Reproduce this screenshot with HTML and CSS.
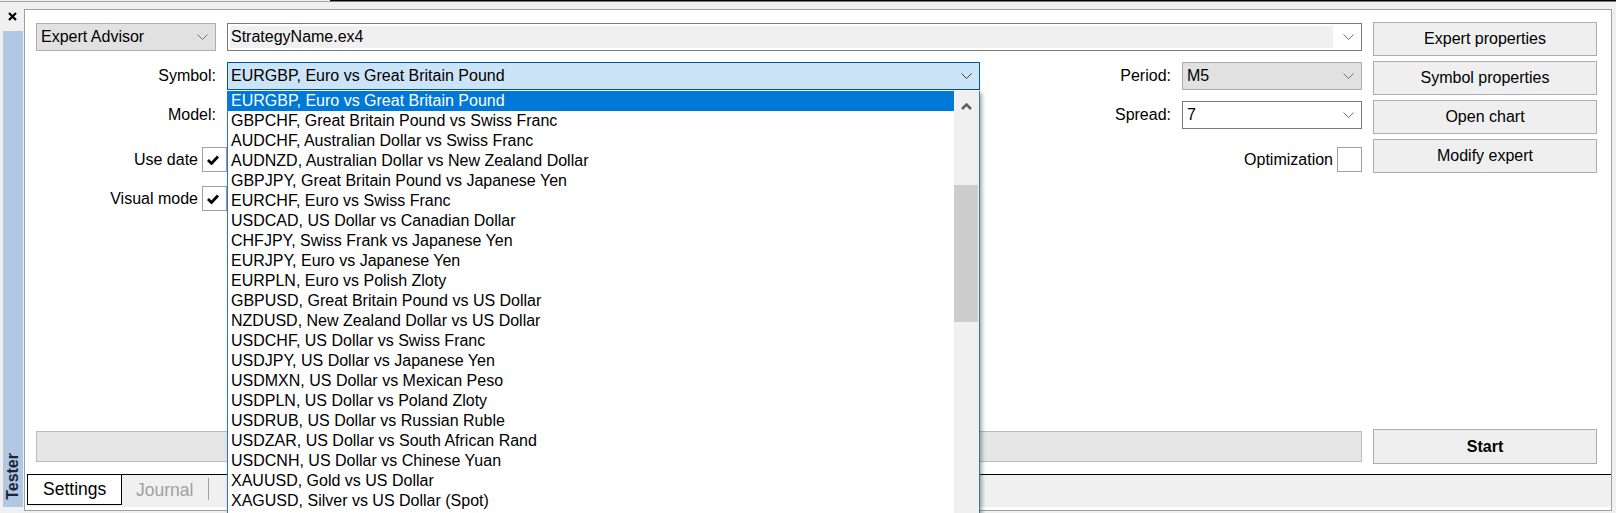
FILE: index.html
```html
<!DOCTYPE html>
<html lang="en">
<head>
    <meta charset="UTF-8">
    <title>Strategy Tester</title>
    <link rel="stylesheet" href="styles.css">
</head>
<body>
    <div class="edge">
        <span class="edge-light"></span>
        <span class="edge-dark"></span>
    </div>
    <div class="main">
        <aside class="dock">
            <div class="dock-close">
                <svg width="9" height="9" viewBox="0 0 9 9"><path d="M1 1 L8 8 M8 1 L1 8" stroke="#000" stroke-width="2.2"/></svg>
            </div>
            <div class="dock-tab"><span>Tester</span></div>
        </aside>
        <div class="workspace">
            <section class="panel">
                <div class="form">
                    <div class="fields">
                        <!-- expert + file -->
                        <div class="row row-first">
                            <div class="combo combo-grey combo-expert">
                                <span class="combo-text">Expert Advisor</span>
                                <svg class="chev" width="11" height="6" viewBox="0 0 11 6"><path d="M0.5 0.5 L5.5 5.5 L10.5 0.5" fill="none" stroke="#707070"/></svg>
                            </div>
                            <div class="combo combo-edit">
                                <span class="combo-edit-text">StrategyName.ex4</span>
                                <svg class="chev" width="11" height="6" viewBox="0 0 11 6"><path d="M0.5 0.5 L5.5 5.5 L10.5 0.5" fill="none" stroke="#707070"/></svg>
                            </div>
                        </div>

                        <!-- symbol + period -->
                        <div class="row">
                            <label class="label">Symbol:</label>
                            <div class="combo combo-open combo-symbol">
                                <span class="combo-text">EURGBP, Euro vs Great Britain Pound</span>
                                <svg class="chev" width="11" height="6" viewBox="0 0 11 6"><path d="M0.5 0.5 L5.5 5.5 L10.5 0.5" fill="none" stroke="#404040"/></svg>
                                <div class="dropdown">
                                    <ul class="dropdown-list">
                                        <li class="selected">EURGBP, Euro vs Great Britain Pound</li>
                                        <li>GBPCHF, Great Britain Pound vs Swiss Franc</li>
                                        <li>AUDCHF, Australian Dollar vs Swiss Franc</li>
                                        <li>AUDNZD, Australian Dollar vs New Zealand Dollar</li>
                                        <li>GBPJPY, Great Britain Pound vs Japanese Yen</li>
                                        <li>EURCHF, Euro vs Swiss Franc</li>
                                        <li>USDCAD, US Dollar vs Canadian Dollar</li>
                                        <li>CHFJPY, Swiss Frank vs Japanese Yen</li>
                                        <li>EURJPY, Euro vs Japanese Yen</li>
                                        <li>EURPLN, Euro vs Polish Zloty</li>
                                        <li>GBPUSD, Great Britain Pound vs US Dollar</li>
                                        <li>NZDUSD, New Zealand Dollar vs US Dollar</li>
                                        <li>USDCHF, US Dollar vs Swiss Franc</li>
                                        <li>USDJPY, US Dollar vs Japanese Yen</li>
                                        <li>USDMXN, US Dollar vs Mexican Peso</li>
                                        <li>USDPLN, US Dollar vs Poland Zloty</li>
                                        <li>USDRUB, US Dollar vs Russian Ruble</li>
                                        <li>USDZAR, US Dollar vs South African Rand</li>
                                        <li>USDCNH, US Dollar vs Chinese Yuan</li>
                                        <li>XAUUSD, Gold vs US Dollar</li>
                                        <li>XAGUSD, Silver vs US Dollar (Spot)</li>
                                    </ul>
                                    <div class="scrollbar">
                                        <div class="scroll-up">
                                            <svg width="11" height="8" viewBox="0 0 11 8"><path d="M1 7 L5.5 2.5 L10 7" fill="none" stroke="#606060" stroke-width="2.5"/></svg>
                                        </div>
                                        <div class="scroll-thumb"></div>
                                    </div>
                                </div>
                            </div>
                            <span class="spacer"></span>
                            <label class="label label-side">Period:</label>
                            <div class="combo combo-grey combo-side">
                                <span class="combo-text">M5</span>
                                <svg class="chev" width="11" height="6" viewBox="0 0 11 6"><path d="M0.5 0.5 L5.5 5.5 L10.5 0.5" fill="none" stroke="#707070"/></svg>
                            </div>
                        </div>

                        <!-- model + spread -->
                        <div class="row">
                            <label class="label">Model:</label>
                            <div class="combo combo-white combo-symbol"></div>
                            <span class="spacer"></span>
                            <label class="label label-side">Spread:</label>
                            <div class="combo combo-white combo-side">
                                <span class="combo-text">7</span>
                                <svg class="chev" width="11" height="6" viewBox="0 0 11 6"><path d="M0.5 0.5 L5.5 5.5 L10.5 0.5" fill="none" stroke="#707070"/></svg>
                            </div>
                        </div>

                        <div class="row row-check row-date">
                            <div class="check-group">
                                <span>Use date</span>
                                <span class="check">
                                    <svg width="12" height="10" viewBox="0 0 12 10"><path d="M1 5 L4.5 8.5 L11 1.5" fill="none" stroke="#000" stroke-width="2.8"/></svg>
                                </span>
                            </div>
                            <span class="spacer"></span>
                            <div class="check-group check-group-side">
                                <span>Optimization</span>
                                <span class="check"></span>
                            </div>
                        </div>

                        <div class="row row-check row-visual">
                            <div class="check-group">
                                <span>Visual mode</span>
                                <span class="check">
                                    <svg width="12" height="10" viewBox="0 0 12 10"><path d="M1 5 L4.5 8.5 L11 1.5" fill="none" stroke="#000" stroke-width="2.8"/></svg>
                                </span>
                            </div>
                        </div>
                    </div>

                    <div class="actions">
                        <button class="btn">Expert properties</button>
                        <button class="btn">Symbol properties</button>
                        <button class="btn">Open chart</button>
                        <button class="btn">Modify expert</button>
                    </div>
                </div>

                <div class="bottom">
                    <div class="progress"></div>
                    <button class="btn btn-start">Start</button>
                </div>

                <nav class="tabs">
                    <span class="tab tab-active">Settings</span>
                    <span class="tab tab-muted">Journal</span>
                    <span class="tab-sep"></span>
                </nav>
            </section>
        </div>
    </div>
</body>
</html>
```

FILE: styles.css
```css
* {
    margin: 0;
    padding: 0;
    box-sizing: border-box;
}

body {
    width: 1616px;
    height: 513px;
    overflow: hidden;
    background: #f0f0f0;
    font-family: "Liberation Sans", Arial, sans-serif;
    font-size: 16px;
    color: #000;
}

/* strip left over from the window above */
.edge {
    display: flex;
    height: 2px;
}

.edge-light {
    width: 330px;
    border-bottom: 1px solid #a0a0a0;
}

.edge-dark {
    flex: 1;
    border-top: 1px solid #000;
    border-bottom: 1px solid #7a7a7a;
}

.main {
    display: flex;
    height: 511px;
}

/* left dock with the vertical tab */
.dock {
    width: 24px;
    display: flex;
    flex-direction: column;
}

.dock-close {
    height: 29px;
    display: flex;
    align-items: center;
    justify-content: center;
}

.dock-tab {
    margin-left: 3px;
    width: 20px;
    height: 476px;
    background: #b0c8e2;
    display: flex;
    align-items: flex-end;
    justify-content: center;
    padding-bottom: 7px;
}

.dock-tab span {
    writing-mode: vertical-rl;
    transform: rotate(180deg);
    font-weight: bold;
    font-size: 16px;
    color: #1b2636;
}

.workspace {
    flex: 1;
    padding: 7px 4px 0 0;
}

.panel {
    height: 502px;
    background: #fff;
    border: 1px solid #a0a0a0;
    display: flex;
    flex-direction: column;
}

.form {
    display: flex;
    gap: 11px;
    padding: 12px 14px 0 11px;
}

.fields {
    flex: 1;
}

.row {
    display: flex;
    align-items: center;
    height: 28px;
    margin-top: 11px;
}

.row-first {
    margin-top: 1px;
}

.row-check {
    height: 25px;
}

.row-date {
    margin-top: 18px;
}

.row-visual {
    margin-top: 14px;
}

.label {
    width: 180px;
    flex-shrink: 0;
    margin-right: 11px;
    text-align: right;
    white-space: nowrap;
}

.label-side {
    width: auto;
}

.spacer {
    flex: 1;
}

/* combo boxes */
.combo {
    display: flex;
    align-items: center;
    height: 28px;
    border: 1px solid #adadad;
    padding: 0 7px 0 4px;
    flex-shrink: 0;
}

.combo-text {
    flex: 1;
    white-space: nowrap;
}

.chev {
    flex-shrink: 0;
}

.combo-grey {
    background: #e1e1e1;
}

.combo-white {
    background: #fff;
    border-color: #7a7a7a;
}

.combo-expert {
    width: 180px;
    margin-right: 11px;
}

.combo-edit {
    flex: 1;
    border-color: #7a7a7a;
    padding: 2px 7px 2px 2px;
}

.combo-edit-text {
    flex: 1;
    align-self: stretch;
    display: flex;
    align-items: center;
    background: #f0f0f0;
    padding-left: 1px;
    margin-right: 10px;
}

.combo-symbol {
    width: 753px;
    position: relative;
    padding-left: 3px;
}

.combo-open {
    background: #cce4f7;
    border-color: #005499;
}

.combo-side {
    width: 180px;
}

/* open symbol list */
.dropdown {
    position: absolute;
    top: 28px;
    left: -1px;
    right: -1px;
    height: 430px;
    display: flex;
    background: #fff;
    border: 1px solid #2b79c2;
    border-top: none;
    box-shadow: 2px 2px 4px rgba(0, 0, 0, 0.35);
    z-index: 5;
}

.dropdown-list {
    flex: 1;
    list-style: none;
}

.dropdown-list li {
    height: 20px;
    line-height: 20px;
    padding-left: 3px;
    white-space: nowrap;
}

.dropdown-list .selected {
    background: #0078d7;
    color: #fff;
}

.scrollbar {
    width: 25px;
    background: #f0f0f0;
}

.scroll-up {
    height: 27px;
    display: flex;
    justify-content: center;
    padding-top: 11px;
}

.scroll-thumb {
    height: 137px;
    margin-top: 67px;
    margin-right: 1px;
    background: #cdcdcd;
}

/* check boxes */
.check-group {
    width: 191px;
    display: flex;
    justify-content: flex-end;
    align-items: center;
    gap: 4px;
    white-space: nowrap;
}

.check-group-side {
    width: auto;
}

.check {
    width: 25px;
    height: 25px;
    border: 1px solid #a0a0a0;
    background: #fff;
    display: flex;
    align-items: center;
    padding-left: 4px;
}

/* buttons */
.actions {
    width: 224px;
    display: flex;
    flex-direction: column;
    gap: 5px;
}

.btn {
    height: 34px;
    border: 1px solid #adadad;
    background: #efefef;
    font-family: inherit;
    font-size: 16px;
    color: #000;
    display: flex;
    align-items: center;
    justify-content: center;
}

.bottom {
    margin: auto 14px 10px 11px;
    display: flex;
    align-items: center;
    gap: 11px;
}

.progress {
    flex: 1;
    height: 31px;
    background: #e6e6e6;
    border: 1px solid #bcbcbc;
}

.btn-start {
    width: 224px;
    height: 35px;
    font-weight: bold;
}

/* bottom tabs */
.tabs {
    margin: 0 0 3px 2px;
    height: 33px;
    border-top: 1px solid #000;
    background: #f0f0f0;
    display: flex;
    align-items: flex-start;
    font-size: 17.5px;
}

.tab {
    height: 30px;
    display: flex;
    align-items: center;
    white-space: nowrap;
}

.tab-active {
    width: 95px;
    padding-left: 15px;
    background: #fff;
    border: 1px solid #000;
    border-top: none;
}

.tab-muted {
    padding: 0 15px 0 14px;
    color: #a0a0a0;
}

.tab-sep {
    width: 1px;
    height: 22px;
    margin-top: 3px;
    background: #a0a0a0;
}
```
